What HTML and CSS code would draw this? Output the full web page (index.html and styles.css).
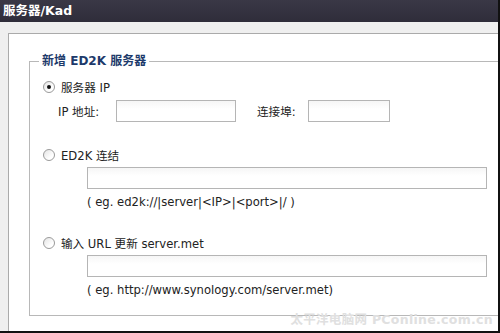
FILE: index.html
```html
<!DOCTYPE html>
<html lang="zh">
<head>
  <meta charset="UTF-8">
  <title>服务器/Kad</title>
  <link rel="stylesheet" href="styles.css">
</head>
<body>
  <div class="window">
    <div class="title-bar">服务器/Kad</div>

    <div class="content">
      <div class="panel">
        <fieldset class="server-box">
          <legend>新增 ED2K 服务器</legend>

          <label class="option">
            <span class="radio checked"></span>
            <span>服务器 IP</span>
          </label>
          <div class="ip-row">
            <span class="ip-label">IP 地址:</span>
            <span class="text-input ip-input"></span>
            <span class="port-label">连接埠:</span>
            <span class="text-input port-input"></span>
          </div>

          <label class="option spaced">
            <span class="radio"></span>
            <span>ED2K 连结</span>
          </label>
          <div class="indent">
            <span class="text-input wide-input"></span>
            <div class="hint">( eg. ed2k://|server|&lt;IP&gt;|&lt;port&gt;|/ )</div>
          </div>

          <label class="option spaced">
            <span class="radio"></span>
            <span>输入 URL 更新 server.met</span>
          </label>
          <div class="indent">
            <span class="text-input wide-input tight"></span>
            <div class="hint">( eg. http://www.synology.com/server.met)</div>
          </div>
        </fieldset>
      </div>
    </div>

    <div class="watermark">太平洋电脑网 PConline.com.cn</div>
  </div>
</body>
</html>
```

FILE: styles.css
```css
body {
  margin: 0;
  background: #efefef;
  font-family: "DejaVu Sans", "Noto Sans CJK SC", sans-serif;
  font-size: 11.6px;
  color: #222;
}

.window {
  position: relative;
  width: 498px;
  height: 331px;
  border-right: 2px solid #111;
  border-bottom: 2px solid #111;
  background: #efefef;
  overflow: hidden;
}

.title-bar {
  height: 22px;
  line-height: 22px;
  padding-left: 3px;
  background: linear-gradient(#3a3846, #2f2d3a);
  color: #fff;
  font-size: 12.5px;
  font-weight: bold;
}

.content {
  padding: 11px 0 0 8px;
}

.panel {
  height: 298px;
  border-top: 1px solid #aaa;
  border-left: 1px solid #aaa;
  background: #fff;
  padding: 20px 0 0 20px;
}

.server-box {
  margin: 0;
  border: 1px solid #b8b8b8;
  border-right: none;
  padding: 0 0 17px 13px;
}

.server-box legend {
  margin-left: -4px;
  padding: 0 3px;
  line-height: 14px;
  font-size: 12px;
  font-weight: bold;
  color: #1d3a6b;
}

.option {
  display: flex;
  align-items: center;
  gap: 6px;
  height: 18px;
  margin-top: 10px;
}

.option.spaced {
  margin-top: 24px;
}

.radio {
  width: 10px;
  height: 10px;
  border: 1px solid #9a9a9a;
  border-radius: 50%;
  background: linear-gradient(135deg, #e4e4e4, #fff 70%);
  position: relative;
}

.radio.checked::after {
  content: "";
  position: absolute;
  left: 3px;
  top: 3px;
  width: 4px;
  height: 4px;
  border-radius: 50%;
  background: #111;
}

.ip-row {
  display: flex;
  align-items: center;
  margin-top: 4px;
  padding-left: 15px;
}

.ip-label {
  width: 58px;
}

.port-label {
  margin-left: 21px;
  width: 51px;
}

.text-input {
  display: block;
  height: 20px;
  border: 1px solid #b5b5b5;
  background: linear-gradient(#f6f6f6, #fff 40%);
}

.ip-input {
  width: 118px;
}

.port-input {
  width: 80px;
}

.indent {
  padding-left: 44px;
  margin-top: 3px;
}

.wide-input {
  width: 398px;
}

.hint {
  margin-top: 5px;
  line-height: 16px;
}

.watermark {
  position: absolute;
  right: 5px;
  bottom: 3px;
  font-size: 12.5px;
  font-weight: bold;
  color: #e0e0e0;
  letter-spacing: 0.3px;
}
```
